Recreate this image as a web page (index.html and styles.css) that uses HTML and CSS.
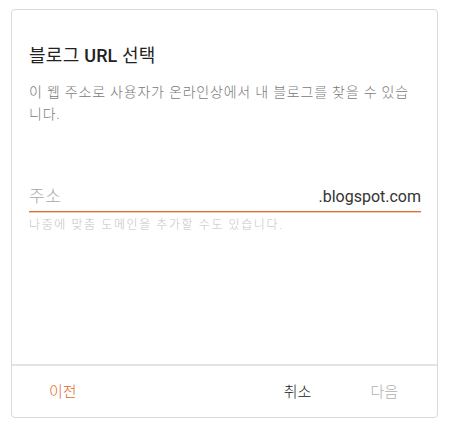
FILE: index.html
```html
<!DOCTYPE html>
<html lang="ko">
<head>
<meta charset="utf-8">
<link rel="stylesheet" href="styles.css">
</head>
<body>
<div class="card">
  <div class="content">
    <h1 class="title">블로그 <span class="latin">URL</span> 선택</h1>
    <p class="desc">이 웹 주소로 사용자가 온라인상에서 내 블로그를 찾을 수 있습니다.</p>
    <div class="field">
      <span class="placeholder">주소</span>
      <span class="suffix">.blogspot.com</span>
    </div>
    <p class="hint">나중에 맞춤 도메인을 추가할 수도 있습니다.</p>
  </div>
  <div class="footer">
    <button class="btn prev">이전</button>
    <div class="right">
      <button class="btn cancel">취소</button>
      <button class="btn next">다음</button>
    </div>
  </div>
</div>
</body>
</html>
```
FILE: styles.css
```css
html, body {
  margin: 0;
  padding: 0;
  background: #fff;
}
body {
  font-family: Roboto, "Noto Sans CJK KR", sans-serif;
  padding: 9px 0 0 11px;
}
.card {
  box-sizing: border-box;
  width: 427px;
  height: 409px;
  border: 1px solid #dadada;
  border-radius: 4px;
  display: flex;
  flex-direction: column;
}
.content {
  flex: 1;
  padding: 32px 16px 0 17px;
}
.title {
  margin: 0;
  font-size: 18px;
  font-weight: 400;
  line-height: 28px;
  color: #212121;
  letter-spacing: 0.3px;
}
.title .latin {
  font-weight: 500;
  letter-spacing: 0;
}
.desc {
  margin: 11px 0 0 0;
  font-size: 14px;
  font-weight: 300;
  line-height: 22px;
  letter-spacing: 0.8px;
  color: #7a7a7a;
  padding-right: 6px;
}
.field {
  margin-top: 59px;
  display: flex;
  justify-content: space-between;
  align-items: baseline;
  border-bottom: 1px solid #d96e2e;
  box-shadow: 0 1px 0 rgba(217, 110, 46, 0.35);
  padding-bottom: 2px;
  font-size: 16px;
  line-height: 24px;
}
.placeholder {
  color: #a8a8a8;
  font-weight: 300;
  font-size: 17px;
  letter-spacing: 0.5px;
}
.suffix {
  color: #333;
}
.hint {
  margin: 5px 0 0 0;
  font-size: 12px;
  font-weight: 300;
  line-height: 16px;
  letter-spacing: 1.6px;
  color: #c4c4c4;
}
.footer {
  height: 51px;
  border-top: 2px solid #e3e3e3;
  display: flex;
  justify-content: space-between;
  align-items: center;
  padding: 0 23px 0 21px;
}
.right {
  display: flex;
  gap: 27px;
}
.btn {
  font-family: Roboto, "Noto Sans CJK KR", sans-serif;
  font-size: 15px;
  font-weight: 300;
  background: none;
  border: none;
  padding: 6px 16px;
  line-height: 20px;
  cursor: pointer;
}
.prev { color: #e4692f; }
.cancel { color: #212121; }
.next { color: #b0b0b0; }
```
